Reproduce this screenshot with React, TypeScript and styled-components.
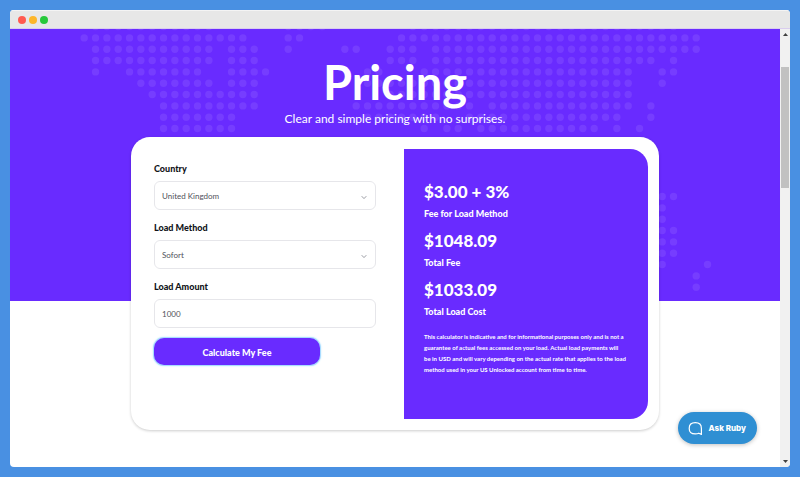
import React, { useState } from 'react';
import styled, { createGlobalStyle } from 'styled-components';

const PURPLE = '#692bff';

const GlobalStyle = createGlobalStyle`
  *, *::before, *::after { box-sizing: border-box; }
  body {
    margin: 0;
    background: #4990e2;
    font-family: Lato, "Liberation Sans", sans-serif;
    color: #111318;
  }
  button, input, select { font-family: inherit; }
`;

const Desktop = styled.div`
  display: flex;
  min-height: 100vh;
  padding: 10px;
`;

const Window = styled.div`
  flex: 1;
  display: flex;
  flex-direction: column;
  border-radius: 4px;
  overflow: hidden;
  background: #fff;
`;

const TitleBar = styled.div`
  display: flex;
  align-items: center;
  gap: 3px;
  height: 19px;
  padding: 0 8px;
  background: #e7e7e7;
  border-top: 1px solid #f4f4f4;
  border-bottom: 1px solid #d9cdee;
`;

const Light = styled.span<{ $color: string }>`
  width: 8px;
  height: 8px;
  border-radius: 50%;
  background: ${(p) => p.$color};
`;

const Viewport = styled.div`
  flex: 1;
  display: flex;
`;

const Page = styled.main`
  position: relative;
  flex: 1;
  min-width: 0;
`;

const Scrollbar = styled.div`
  display: flex;
  flex-direction: column;
  align-items: center;
  justify-content: space-between;
  width: 10px;
  padding: 4px 1px;
  background: #f1f1f1;
`;

const ScrollTrack = styled.div`
  flex: 1;
  align-self: stretch;
  padding-top: 31px;
`;

const ScrollThumb = styled.div`
  height: 121px;
  background: #c1c1c1;
`;

const ScrollArrow = styled.svg`
  display: block;
  width: 5px;
  height: 3px;
  fill: #404040;
`;

const Hero = styled.header`
  position: relative;
  overflow: hidden;
  padding: 25px 16px 175px;
  background: ${PURPLE};
  color: #fff;
  text-align: center;
`;

const DotMap = styled.svg`
  position: absolute;
  top: 0;
  left: 50%;
  width: 770px;
  height: 273px;
  transform: translateX(-50%);
  fill: #763dff;
`;

const HeroText = styled.div`
  position: relative;
`;

const Title = styled.h1`
  margin: 0 0 2px;
  font-size: 47px;
  line-height: 56px;
  font-weight: 700;
`;

const Subtitle = styled.p`
  margin: 0;
  font-size: 12px;
  line-height: 14px;
`;

const Card = styled.section`
  position: relative;
  display: grid;
  grid-template-columns: 273px 1fr;
  max-width: 528px;
  margin: -164px auto 36px;
  padding: 12px 11px 11px 0;
  border-radius: 19px;
  background: #fff;
  box-shadow: 0 1px 3px rgba(0, 0, 0, 0.2);
`;

const Form = styled.form`
  display: flex;
  flex-direction: column;
  align-items: flex-start;
  padding: 12px 28px 0 23px;
`;

const Field = styled.div`
  align-self: stretch;
  display: flex;
  flex-direction: column;
  gap: 4px;
  margin-bottom: 10px;
`;

const Label = styled.label`
  font-size: 9px;
  line-height: 16px;
  font-weight: 900;
`;

const controlStyle = `
  width: 100%;
  height: 29px;
  padding: 0 7px;
  border: 1px solid #e6e6ea;
  border-radius: 6px;
  background: #fff;
  color: #50525a;
  font-size: 8px;
  outline: none;
`;

const SelectWrap = styled.div`
  position: relative;
`;

const Select = styled.select`
  ${controlStyle}
  display: block;
  appearance: none;
`;

const Chevron = styled.svg`
  position: absolute;
  right: 9px;
  top: 14px;
  width: 6px;
  height: 5px;
  fill: none;
  stroke: #9a9ca3;
  pointer-events: none;
`;

const Input = styled.input`
  ${controlStyle}
`;

const SubmitButton = styled.button`
  width: 166px;
  height: 27px;
  padding: 2px 0 0;
  border: 0;
  border-radius: 10px;
  background: ${PURPLE};
  box-shadow: 0 0 0 1px #a9dcff, 0 0 2px 1px #bfe8ff;
  color: #fff;
  font-size: 9px;
  font-weight: 900;
`;

const Results = styled.div`
  min-height: 270px;
  padding: 31px 16px 40px 20px;
  border-radius: 0 18px 18px 0;
  background: ${PURPLE};
  color: #fff;
`;

const Figures = styled.dl`
  display: flex;
  flex-direction: column;
  gap: 5px;
  margin: 0;
`;

const Figure = styled.div`
  display: flex;
  flex-direction: column-reverse;
`;

const FigureValue = styled.dd`
  margin: 0;
  font-size: 17px;
  line-height: 24px;
  font-weight: 900;
`;

const FigureLabel = styled.dt`
  font-size: 9px;
  line-height: 20px;
  font-weight: 900;
`;

const Disclaimer = styled.p`
  margin: 9px 0 0;
  font-size: 6px;
  line-height: 11px;
  font-weight: 700;
`;

const ChatButton = styled.button`
  position: absolute;
  right: 23px;
  bottom: 23px;
  display: flex;
  align-items: center;
  gap: 6px;
  height: 32px;
  padding: 0 11px 0 10px;
  border: 0;
  border-radius: 16px;
  background: #2f8fd3;
  box-shadow: 0 1px 4px rgba(0, 0, 0, 0.25);
  color: #fff;
  font-family: Inter, "Liberation Sans", sans-serif;
  font-size: 8px;
  font-weight: 800;
`;

const ChatIcon = styled.svg`
  width: 15px;
  height: 15px;
  fill: none;
  stroke: #fff;
`;

/* Runs of filled columns, per row of the world map. */
const mapRows: Record<number, [number, number][]> = {
  [-1]: [[1, 11], [18, 21], [29, 52]],
  0: [[0, 14], [18, 19], [28, 54]],
  1: [[1, 11], [13, 15], [18, 18], [23, 24], [27, 29], [31, 54]],
  2: [[1, 11], [13, 15], [27, 29], [31, 50], [52, 52]],
  3: [[1, 1], [4, 10], [13, 16], [25, 26], [30, 48], [51, 52]],
  4: [[5, 11], [13, 15], [25, 48], [51, 51]],
  5: [[6, 15], [27, 48]],
  6: [[7, 15], [24, 34], [36, 48], [50, 50]],
  7: [[7, 13], [25, 31], [34, 47], [50, 50]],
  8: [[7, 13], [30, 30], [32, 33], [35, 45], [47, 47], [49, 49]],
  14: [[51, 52]],
  15: [[51, 51]],
  16: [[51, 51]],
  17: [[51, 52]],
  18: [[51, 52]],
  19: [[51, 52]],
  20: [[51, 51], [55, 55]],
  21: [[54, 54]],
  22: [[54, 54]],
};

const PITCH = 34 / 3;
const dots = Object.entries(mapRows).flatMap(([row, runs]) =>
  runs.flatMap(([from, to]) =>
    Array.from({ length: to - from + 1 }, (_, i) => ({
      x: 74.2 + (from + i) * PITCH,
      y: 8.9 + Number(row) * PITCH,
    })),
  ),
);

const figures = [
  { value: '$3.00 + 3%', label: 'Fee for Load Method' },
  { value: '$1048.09', label: 'Total Fee' },
  { value: '$1033.09', label: 'Total Load Cost' },
];

function SelectField({ id, label, options }: { id: string; label: string; options: string[] }) {
  return (
    <Field>
      <Label htmlFor={id}>{label}</Label>
      <SelectWrap>
        <Select id={id}>
          {options.map((o) => (
            <option key={o}>{o}</option>
          ))}
        </Select>
        <Chevron viewBox="0 0 6 5" aria-hidden="true">
          <path d="M.7 1.2 3 3.6 5.3 1.2" />
        </Chevron>
      </SelectWrap>
    </Field>
  );
}

export default function App() {
  const [amount, setAmount] = useState('1000');
  return (
    <>
      <GlobalStyle />
      <Desktop>
        <Window>
          <TitleBar>
            <Light $color="#ff5a50" />
            <Light $color="#fdb62a" />
            <Light $color="#27c83b" />
          </TitleBar>
          <Viewport>
            <Page>
              <Hero>
                <DotMap viewBox="0 0 770 273" aria-hidden="true">
                  {dots.map((d) => (
                    <circle key={`${d.x}-${d.y}`} cx={d.x} cy={d.y} r="3.7" />
                  ))}
                </DotMap>
                <HeroText>
                  <Title>Pricing</Title>
                  <Subtitle>Clear and simple pricing with no surprises.</Subtitle>
                </HeroText>
              </Hero>
              <Card>
                <Form onSubmit={(e) => e.preventDefault()}>
                  <SelectField id="country" label="Country" options={['United Kingdom']} />
                  <SelectField id="method" label="Load Method" options={['Sofort']} />
                  <Field>
                    <Label htmlFor="amount">Load Amount</Label>
                    <Input id="amount" value={amount} onChange={(e) => setAmount(e.target.value)} />
                  </Field>
                  <SubmitButton type="submit">Calculate My Fee</SubmitButton>
                </Form>
                <Results>
                  <Figures>
                    {figures.map((f) => (
                      <Figure key={f.label}>
                        <FigureLabel>{f.label}</FigureLabel>
                        <FigureValue>{f.value}</FigureValue>
                      </Figure>
                    ))}
                  </Figures>
                  <Disclaimer>
                    This calculator is indicative and for informational purposes only and is not a
                    <br />
                    guarantee of actual fees accessed on your load. Actual load payments will
                    <br />
                    be in USD and will vary depending on the actual rate that applies to the load
                    <br />
                    method used in your US Unlocked account from time to time.
                  </Disclaimer>
                </Results>
              </Card>
              <ChatButton type="button">
                <ChatIcon viewBox="0 0 15 15" aria-hidden="true">
                  <path
                    d="M13.4 13.4V7.400C13.400 3.600 11 1.700 7.300 1.700S1.200 3.900 1.200 7.400s2.500 5.500 6.100 5.500c1.300 0 2.500-.2 3.500-.7Z"
                    strokeWidth="1.2"
                    strokeLinejoin="round"
                  />
                </ChatIcon>
                Ask Ruby
              </ChatButton>
            </Page>
            <Scrollbar aria-hidden="true">
              <ScrollArrow viewBox="0 0 5 3">
                <path d="M0 3 2.5 0 5 3Z" />
              </ScrollArrow>
              <ScrollTrack>
                <ScrollThumb />
              </ScrollTrack>
              <ScrollArrow viewBox="0 0 5 3">
                <path d="M0 0 2.5 3 5 0Z" />
              </ScrollArrow>
            </Scrollbar>
          </Viewport>
        </Window>
      </Desktop>
    </>
  );
}
